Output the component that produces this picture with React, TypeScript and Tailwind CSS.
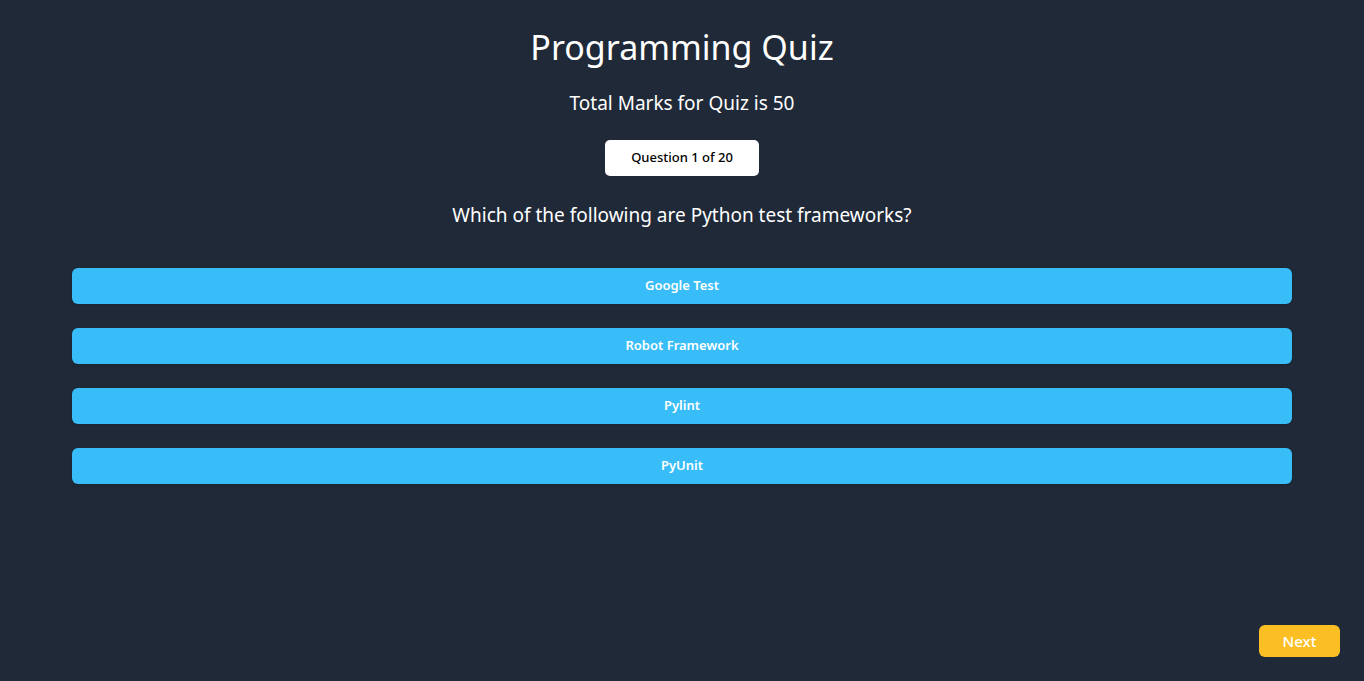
const options = ["Google Test", "Robot Framework", "Pylint", "PyUnit"];

function App() {
  return (
    <div
      className="w-full h-screen bg-[#1f2937] text-white flex flex-col"
      style={{ fontFamily: '"Noto Sans", "Open Sans", sans-serif' }}
    >
      <div className="flex flex-col items-center pt-[27px]">
        <h1 className="text-[34px] leading-[40px]">Programming Quiz</h1>
        <p className="mt-[22px] text-[19px] leading-[28px]">Total Marks for Quiz is 50</p>
        <div className="mt-[23px] w-[154px] h-9 bg-white text-black rounded-[5px] flex items-center justify-center text-[13px] font-medium">
          Question 1 of 20
        </div>
        <p className="mt-[25px] text-[19px] leading-[28px]">
          Which of the following are Python test frameworks?
        </p>
      </div>

      <div className="mx-[72px] mt-[39px] flex flex-col gap-6">
        {options.map((o) => (
          <button
            key={o}
            className="h-9 w-full rounded-md bg-[#38bdf8] text-white text-[13px] font-semibold shadow"
          >
            {o}
          </button>
        ))}
      </div>

      <div className="flex-1" />

      <div className="flex justify-end pr-6 pb-6">
        <button className="w-[81px] h-8 rounded-md bg-[#fbbf24] text-white text-[15px] font-medium">
          Next
        </button>
      </div>
    </div>
  );
}

export default App;
